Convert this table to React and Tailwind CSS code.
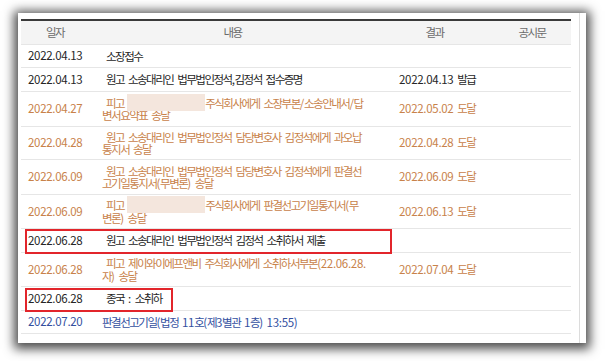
import React from "react";

const HANGUL = /([\uAC00-\uD7A3]+)/;
const MASK = "__mask__";

// hangul runs are drawn narrower than the latin/digit runs, like the court site font
function T({ s }) {
  return s.split(HANGUL).map((p, i) =>
    i % 2 ? (
      <span key={i} className="text-[11.5px] tracking-[-1.5px]">
        {p}
      </span>
    ) : (
      <React.Fragment key={i}>{p}</React.Fragment>
    )
  );
}

const tones = {
  dark: "text-[#262626]",
  orange: "text-[#c8824a]",
  blue: "text-[#33509f]",
};

const rows = [
  { d: "2022.04.13", c: [["소장접수"]], tone: "dark", h: "h-[23px]", ind: true },
  {
    d: "2022.04.13",
    c: [["원고 소송대리인 법무법인정석,김정석 접수증명"]],
    r: "2022.04.13 발급",
    tone: "dark",
    h: "h-[24px]",
    ind: true,
  },
  {
    d: "2022.04.27",
    c: [["피고", MASK, "주식회사에게 소장부본/소송안내서/답"], ["변서요약표 송달"]],
    r: "2022.05.02 도달",
    tone: "orange",
    h: "h-[35px]",
  },
  {
    d: "2022.04.28",
    c: [["원고 소송대리인 법무법인정석 담당변호사 김정석에게 과오납"], ["통지서 송달"]],
    r: "2022.04.28 도달",
    tone: "orange",
    h: "h-[33px]",
  },
  {
    d: "2022.06.09",
    c: [["원고 소송대리인 법무법인정석 담당변호사 김정석에게 판결선"], ["고기일통지서(무변론) 송달"]],
    r: "2022.06.09 도달",
    tone: "orange",
    h: "h-[35px]",
  },
  {
    d: "2022.06.09",
    c: [["피고", MASK, "주식회사에게 판결선고기일통지서(무"], ["변론) 송달"]],
    r: "2022.06.13 도달",
    tone: "orange",
    h: "h-[34px]",
  },
  {
    d: "2022.06.28",
    c: [["원고 소송대리인 법무법인정석 김정석 소취하서 제출"]],
    tone: "dark",
    h: "h-[24px]",
    ind: true,
    box: "w-[367px] h-[25px] top-0",
  },
  {
    d: "2022.06.28",
    c: [["피고 제이와이에프앤비 주식회사에게 소취하서부본(22.06.28."], ["자) 송달"]],
    r: "2022.07.04 도달",
    tone: "orange",
    h: "h-[34px]",
  },
  {
    d: "2022.06.28",
    c: [["종국 : 소취하"]],
    tone: "dark",
    h: "h-[24px]",
    ind: true,
    box: "w-[148px] h-[24px] top-[1px]",
  },
  {
    d: "2022.07.20",
    c: [["판결선고기일(법정 11호(제3별관 1층) 13:55)"]],
    tone: "blue",
    h: "h-[23px]",
  },
];

function Line({ parts, first, row }) {
  const indent = row.ind || (first && row.tone === "orange") ? "pl-[4px]" : "";
  return (
    <div className={`leading-[12.5px] whitespace-nowrap ${indent}`}>
      {parts.map((p, i) =>
        p === MASK ? (
          <span key={i} className="relative inline-block w-[78px] h-[12px] ml-[3px] align-top">
            <span className="absolute left-0 right-0 -top-[3px] h-[17px] bg-[#f4e6dd]" />
          </span>
        ) : (
          <T key={i} s={p} />
        )
      )}
    </div>
  );
}

export default function App() {
  return (
    <div className="w-[606px] h-[361px] bg-white pt-[13px] pl-[18px] font-['Noto_Sans_CJK_KR',sans-serif] text-[11.5px] tracking-[-0.3px] [word-spacing:1.5px]">
      <div className="w-[568px] h-[330px] bg-white flex shadow-[0_2px_10px_4px_rgba(0,0,0,0.7)]">
        <div className="w-[561px] pl-[3px] pt-[6px]">
          <div className="w-[550px]">
            {/* header */}
            <div className="flex h-[26px] items-center border-t-2 border-t-[#3a3a3a] border-b border-b-[#e6e6e6] bg-[#f4f4f4] text-[#6b6b6b]">
              <div className="w-[68px] text-center"><T s="일자" /></div>
              <div className="w-[287px] text-center"><T s="내용" /></div>
              <div className="w-[117px] text-center"><T s="결과" /></div>
              <div className="w-[78px] text-center"><T s="공시문" /></div>
            </div>

            {rows.map((row, i) => (
              <div
                key={i}
                className={`relative flex items-center border-b border-[#e6e6e6] ${row.h} ${tones[row.tone]}`}
              >
                <div className="w-[68px] pl-[7px]">{row.d}</div>
                <div className="w-[287px] pl-[13px]">
                  {row.c.map((parts, j) => (
                    <Line key={j} parts={parts} first={j === 0} row={row} />
                  ))}
                </div>
                <div className="w-[117px] pl-[23px] whitespace-nowrap">
                  {row.r && <T s={row.r} />}
                </div>
                <div className="w-[78px]" />
                {row.box && (
                  <div className={`absolute left-[4px] border-2 border-[#e2252b] ${row.box}`} />
                )}
              </div>
            ))}
          </div>
        </div>
        <div className="border-l border-[#dcdcdc]" />
      </div>
    </div>
  );
}
